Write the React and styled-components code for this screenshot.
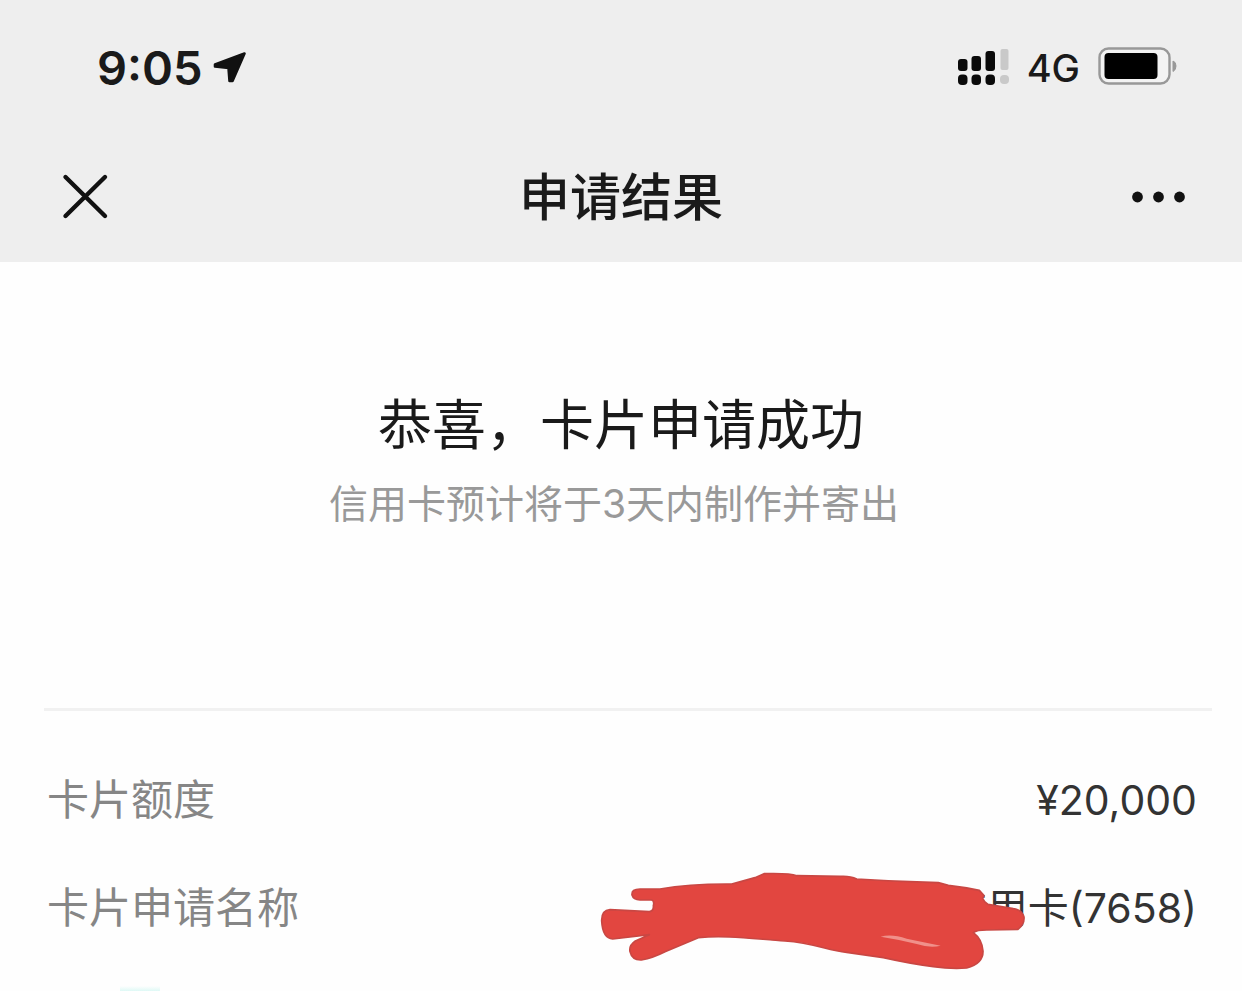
import React from "react";
import styled, { createGlobalStyle } from "styled-components";

const GlobalStyle = createGlobalStyle`
* {
  box-sizing: border-box;
}
body {
  margin: 0;
  background-color: #fefefe;
  color: #1a1a1a;
  font-family: Inter, "Noto Sans CJK SC", sans-serif;
}
`;

const Header = styled.header`
background-color: #eeeeee;
`;

const StatusBar = styled.div`
display: flex;
align-items: center;
justify-content: space-between;
height: 132px;
padding: 4px 64px 0 97px;
`;

const StatusGroup = styled.div`
display: flex;
align-items: center;
gap: ${(props) => props.$gap}px;
`;

const Time = styled.span`
font-size: 47px;
line-height: 60px;
font-weight: 600;
`;

const Network = styled.span`
font-size: 38px;
line-height: 60px;
font-weight: 500;
`;

const NavBar = styled.nav`
display: grid;
grid-template-columns: 1fr auto 1fr;
align-items: center;
height: 130px;
padding: 0 54px;
`;

const Title = styled.h1`
margin: 0;
padding-top: 2px;
font-size: 51px;
line-height: 72px;
font-weight: 500;
`;

const IconButton = styled.button`
display: flex;
justify-self: ${(props) => props.$side};
padding: 0;
border: 0;
background: none;
color: #111;
cursor: pointer;
`;

const Result = styled.section`
display: flex;
flex-direction: column;
align-items: center;
padding: 124px 44px 176px;
text-align: center;
`;

const Heading = styled.h2`
margin: 0;
font-size: 54px;
line-height: 80px;
font-weight: 400;
`;

const Hint = styled.p`
margin: 10px 14px 0 0;
font-size: 39px;
line-height: 56px;
font-weight: 400;
color: #999;
`;

const Divider = styled.hr`
height: 3px;
margin: 0 30px 0 44px;
border: 0;
background-color: #f1f1f1;
`;

const Details = styled.dl`
display: flex;
flex-direction: column;
gap: 48px;
margin: 0;
padding: 59px 45px 0 47px;
`;

const Row = styled.div`
display: flex;
justify-content: space-between;
font-size: 42px;
line-height: 60px;
`;

const Label = styled.dt`
font-weight: 400;
color: #868686;
`;

const Value = styled.dd`
position: relative;
margin: 0;
font-size: 41px;
font-weight: 400;
color: #333;
`;

const Scribble = styled.svg`
position: absolute;
top: -17px;
right: 167px;
`;

const Footer = styled.footer`
display: flex;
padding: 48px 120px 0;
`;

const Glow = styled.div`
width: 40px;
height: 6px;
background: linear-gradient(#fefefe, #d8f8f4);
`;

const ArrowIcon = () => (
  <svg width="34" height="34" viewBox="0 0 34 34" aria-hidden="true">
    <path
      d="M31.5 2.5 L19.5 30 L16.5 30 L15.5 17 L2 15.5 L2 13.5Z"
      fill="#111"
      stroke="#111"
      strokeWidth="2.6"
      strokeLinejoin="round"
    />
  </svg>
);

const SignalIcon = () => (
  <svg width="52" height="38" viewBox="0 0 52 38" aria-hidden="true">
    <g fill="#0a0a0a">
      <rect x="1" y="10" width="9.5" height="12" rx="3" />
      <rect x="14.5" y="7" width="9.5" height="15" rx="3" />
      <rect x="28.5" y="2" width="9.5" height="20" rx="3" />
      <rect x="1" y="25.5" width="9.5" height="10.5" rx="4" />
      <rect x="14.5" y="25.5" width="9.5" height="10.5" rx="4" />
      <rect x="28.5" y="25.5" width="9.5" height="10.5" rx="4" />
    </g>
    <g fill="#c9c9c9">
      <rect x="43.5" y="0" width="8" height="21" rx="2" />
      <rect x="43" y="26" width="9" height="9" rx="4" />
    </g>
  </svg>
);

const BatteryIcon = () => (
  <svg width="80" height="42" viewBox="0 0 80 42" aria-hidden="true">
    <rect x="1.5" y="1.5" width="70" height="35" rx="9" fill="#f3f3f3" stroke="#989898" strokeWidth="2.4" />
    <rect x="6.5" y="6" width="53" height="26" rx="4" fill="#000" />
    <path d="M75 14 Q78 15 78 19 T75 24.5Z" fill="#999" stroke="#999" />
  </svg>
);

const CloseIcon = () => (
  <svg width="56" height="50" viewBox="-6 0 56 50" aria-hidden="true">
    <path d="M5.5 5 L45 44 M45 5 L5.5 44" fill="none" stroke="currentColor" strokeWidth="4.4" strokeLinecap="round" />
  </svg>
);

const MoreIcon = () => (
  <svg width="58" height="16" viewBox="0 0 58 16" aria-hidden="true">
    <circle cx="7.5" cy="8" r="5.4" fill="currentColor" />
    <circle cx="28.5" cy="8" r="5.4" fill="currentColor" />
    <circle cx="49.5" cy="8" r="5.4" fill="currentColor" />
  </svg>
);

const Redaction = () => (
  <Scribble width="440" height="131" viewBox="0 0 1320 393" aria-hidden="true">
    <path
      d="M150 84 Q124 84 126 102 Q130 116 150 117 L185 117 Q194 120 190 134 Q192 150 178 152 L60 146 Q34 148 35 180 Q38 232 68 234 L178 221 L136 240 Q116 254 120 272 Q126 298 154 297 Q190 290 225 272 L325 230 C405 222 485 233 585 240 C675 246 710 268 770 274 L880 290 Q960 308 1030 317 Q1080 324 1130 321 Q1180 308 1179 270 Q1176 234 1150 215 Q1160 207 1190 207 L1284 205 Q1304 190 1302 168 Q1295 146 1270 143 L1194 130 L1184 122 L1178 112 L1182 104 L1168 88 Q1120 78 1075 73 L1045 65 Q920 62 800 54 Q780 44 750 46 L620 44 Q600 36 522 38 L495 50 Q460 60 425 69 Q300 68 210 84Z"
      fill="#e24640"
      stroke="#c94743"
      strokeWidth="5"
      strokeLinejoin="round"
    />
    <path d="M872 227 Q905 218 950 233 L1052 254 Q1020 262 980 249 Q930 236 872 227Z" fill="#f0908a" />
  </Scribble>
);

const App = () => {
  return (
    <>
      <GlobalStyle />
      <Header>
        <StatusBar>
          <StatusGroup $gap={10}>
            <Time>9:05</Time>
            <ArrowIcon />
          </StatusGroup>
          <StatusGroup $gap={18}>
            <SignalIcon />
            <Network>4G</Network>
            <BatteryIcon />
          </StatusGroup>
        </StatusBar>
        <NavBar>
          <IconButton $side="start" aria-label="关闭">
            <CloseIcon />
          </IconButton>
          <Title>申请结果</Title>
          <IconButton $side="end" aria-label="更多">
            <MoreIcon />
          </IconButton>
        </NavBar>
      </Header>
      <main>
        <Result>
          <Heading>恭喜，卡片申请成功</Heading>
          <Hint>信用卡预计将于3天内制作并寄出</Hint>
        </Result>
        <Divider />
        <Details>
          <Row>
            <Label>卡片额度</Label>
            <Value>¥20,000</Value>
          </Row>
          <Row>
            <Label>卡片申请名称</Label>
            <Value>
              信用卡(7658)
              <Redaction />
            </Value>
          </Row>
        </Details>
      </main>
      <Footer>
        <Glow />
      </Footer>
    </>
  );
};

export default App;
